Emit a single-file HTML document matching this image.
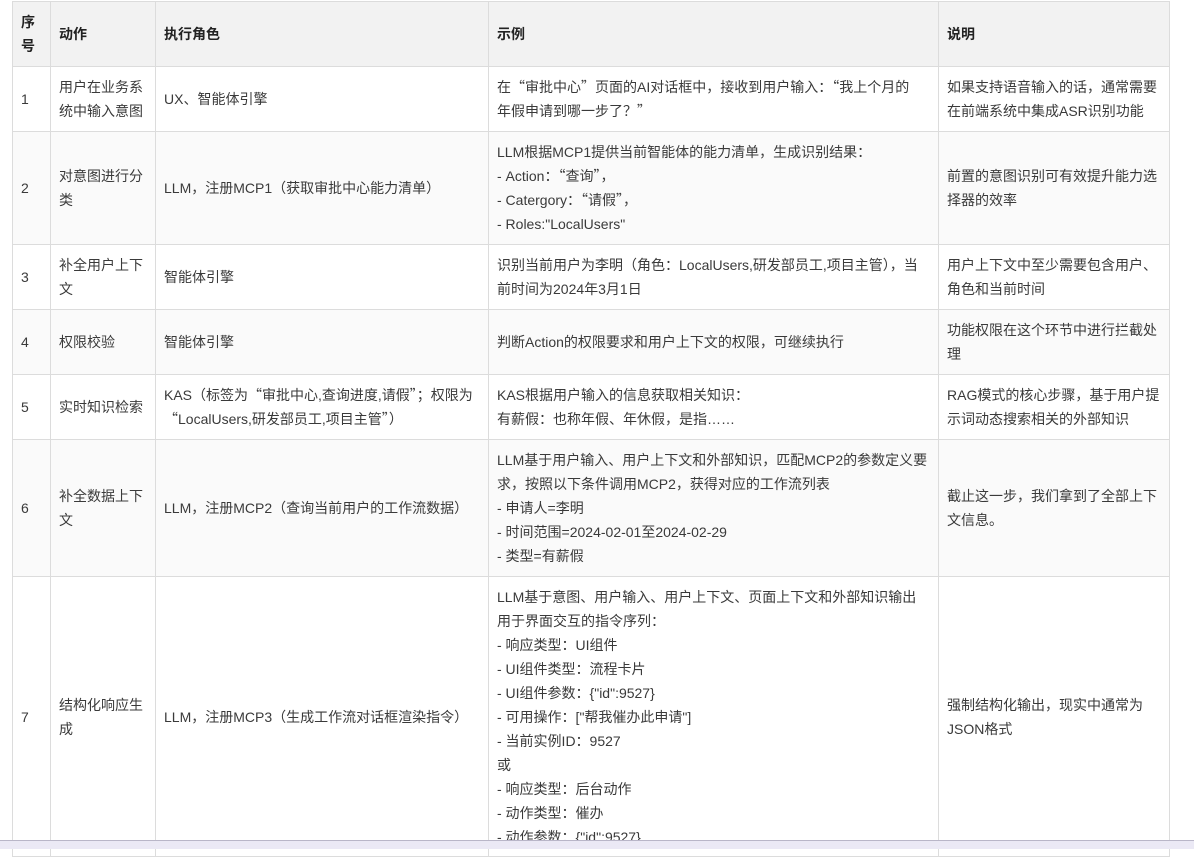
<!DOCTYPE html>
<html><head><meta charset="utf-8"><style>
html,body{margin:0;padding:0;background:#fff;width:1194px;height:848px;overflow:hidden}
body{font-family:"Liberation Sans","Noto Sans CJK SC",sans-serif;font-size:14px;color:#3a3a3a}
table{position:absolute;left:12px;top:1px;border-collapse:collapse;table-layout:fixed}
td,th{border:1px solid #dcdcdc;padding:0 8px;vertical-align:middle;line-height:24px;text-align:left;word-break:normal;overflow-wrap:break-word}
th{background:#f2f2f2;font-weight:bold;color:#222}
tr.g td{background:#fafafa}
.q{font-family:"Noto Sans CJK SC",sans-serif}
.bar{position:absolute;z-index:5;left:0;top:840px;width:1194px;height:8px;background:#ebe9f5;border-top:1px solid #b9b6c8}
</style></head><body>
<table>
<colgroup><col style="width:38px"><col style="width:105px"><col style="width:333px"><col style="width:450px"><col style="width:231px"></colgroup>
<tr style="height:65px"><th>序号</th><th>动作</th><th>执行角色</th><th>示例</th><th>说明</th></tr>
<tr style="height:65px"><td>1</td><td>用户在业务系统中输入意图</td><td>UX、智能体引擎</td><td>在<span class="q">“</span>审批中心<span class="q">”</span>页面的AI对话框中，接收到用户输入<span class="q">：“</span>我上个月的<br>年假申请到哪一步了？<span class="q">”</span></td><td>如果支持语音输入的话，通常需要在前端系统中集成ASR识别功能</td></tr>
<tr class="g" style="height:113px"><td>2</td><td>对意图进行分类</td><td>LLM，注册MCP1（获取审批中心能力清单）</td><td>LLM根据MCP1提供当前智能体的能力清单，生成识别结果：<br>- Action<span class="q">：“</span>查询<span class="q">”</span>，<br>- Catergory<span class="q">：“</span>请假<span class="q">”</span>，<br>- Roles:"LocalUsers"</td><td>前置的意图识别可有效提升能力选择器的效率</td></tr>
<tr style="height:65px"><td>3</td><td>补全用户上下文</td><td>智能体引擎</td><td>识别当前用户为李明（角色：LocalUsers,研发部员工,项目主管），当前时间为2024年3月1日</td><td>用户上下文中至少需要包含用户、角色和当前时间</td></tr>
<tr class="g" style="height:65px"><td>4</td><td>权限校验</td><td>智能体引擎</td><td>判断Action的权限要求和用户上下文的权限，可继续执行</td><td>功能权限在这个环节中进行拦截处理</td></tr>
<tr style="height:65px"><td>5</td><td>实时知识检索</td><td>KAS（标签为<span class="q">“</span>审批中心,查询进度,请假<span class="q">”</span>；权限为<br><span class="q">“</span>LocalUsers,研发部员工,项目主管<span class="q">”</span>）</td><td>KAS根据用户输入的信息获取相关知识：<br>有薪假：也称年假、年休假，是指……</td><td>RAG模式的核心步骤，基于用户提示词动态搜索相关的外部知识</td></tr>
<tr class="g" style="height:137px"><td>6</td><td>补全数据上下文</td><td>LLM，注册MCP2（查询当前用户的工作流数据）</td><td>LLM基于用户输入、用户上下文和外部知识，匹配MCP2的参数定义要求，按照以下条件调用MCP2，获得对应的工作流列表<br>- 申请人=李明<br>- 时间范围=2024-02-01至2024-02-29<br>- 类型=有薪假</td><td>截止这一步，我们拿到了全部上下文信息。</td></tr>
<tr style="height:280px"><td>7</td><td>结构化响应生成</td><td>LLM，注册MCP3（生成工作流对话框渲染指令）</td><td style="padding-top:8px;vertical-align:top">LLM基于意图、用户输入、用户上下文、页面上下文和外部知识输出用于界面交互的指令序列：<br>- 响应类型：UI组件<br>- UI组件类型：流程卡片<br>- UI组件参数：{"id":9527}<br>- 可用操作：["帮我催办此申请"]<br>- 当前实例ID：9527<br>或<br>- 响应类型：后台动作<br>- 动作类型：催办<br>- 动作参数：{"id":9527}</td><td>强制结构化输出，现实中通常为<br>JSON格式</td></tr>
</table>
<div class="bar"></div>
</body></html>
